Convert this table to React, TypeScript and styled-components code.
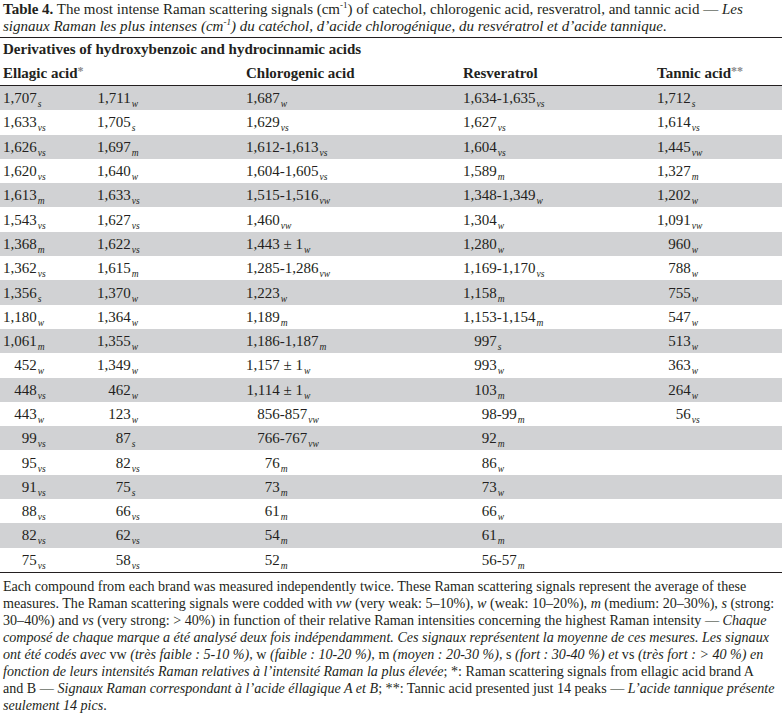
import React from "react";
import styled, { createGlobalStyle } from "styled-components";

const Global = createGlobalStyle`
  html, body { margin: 0; padding: 0; background: #ffffff; }
  body { font-family: "Liberation Serif", "Times New Roman", serif; color: #231f20; }
`;

const Page = styled.div`
  width: 782px;
  font-family: "Liberation Serif", "Times New Roman", serif;
  color: #231f20;
`;

const Caption = styled.div`
  font-size: 15px;
  line-height: 17px;
  padding: 1px 3px 2px 3px;
  border-bottom: 1.5px solid #231f20;
  white-space: nowrap;
`;

const Strong = styled.b`
  font-weight: bold;
`;

const Sup = styled.sup`
  font-size: 9px;
  line-height: 0;
  vertical-align: 6px;
`;

const GroupTitle = styled.div`
  font-size: 15px;
  font-weight: bold;
  line-height: 23px;
  height: 23px;
  padding: 0 3px;
`;

const Grid = styled.div`
  display: grid;
  grid-template-columns: 94px 149px 217px 194px 1fr;
  align-items: center;
  padding-left: 3px;
`;

const HeaderRow = styled(Grid)`
  height: 24px;
  font-size: 15px;
  font-weight: bold;
  border-bottom: 1.5px solid #231f20;
`;

const HeadCell = styled.div<{ $span?: number }>`
  grid-column: span ${(p) => p.$span ?? 1};
  white-space: nowrap;
`;

const Star = styled.span`
  color: #8a8a8a;
  font-size: 12px;
  vertical-align: 3px;
  font-weight: bold;
`;

const Row = styled(Grid)<{ $shade: boolean }>`
  height: 24.3px;
  font-size: 15px;
  background: ${(p) => (p.$shade ? "#d1d2d4" : "#ffffff")};
`;

const Cell = styled.div`
  white-space: nowrap;
  line-height: 18px;
`;

const Lead = styled.span`
  display: inline-block;
  width: 2.25em;
  text-align: right;
`;

const Sub = styled.span`
  font-style: italic;
  font-size: 9.5px;
  vertical-align: -4px;
  line-height: 0;
  margin-left: 1px;
`;

const TableEnd = styled.div`
  border-top: 1.5px solid #231f20;
`;

const Note = styled.div`
  font-size: 14.1px;
  line-height: 17px;
  padding: 5px 3px 0 3px;
  white-space: nowrap;
`;

type V = [string, string, string] | null; // lead, rest, sub

const rows: V[][] = [
  [["1,707", "", "s"], ["1,711", "", "w"], ["1,687", "", "w"], ["1,634", "-1,635", "vs"], ["1,712", "", "s"]],
  [["1,633", "", "vs"], ["1,705", "", "s"], ["1,629", "", "vs"], ["1,627", "", "vs"], ["1,614", "", "vs"]],
  [["1,626", "", "vs"], ["1,697", "", "m"], ["1,612", "-1,613", "vs"], ["1,604", "", "vs"], ["1,445", "", "vw"]],
  [["1,620", "", "vs"], ["1,640", "", "w"], ["1,604", "-1,605", "vs"], ["1,589", "", "m"], ["1,327", "", "m"]],
  [["1,613", "", "m"], ["1,633", "", "vs"], ["1,515", "-1,516", "vw"], ["1,348", "-1,349", "w"], ["1,202", "", "w"]],
  [["1,543", "", "vs"], ["1,627", "", "vs"], ["1,460", "", "vw"], ["1,304", "", "w"], ["1,091", "", "vw"]],
  [["1,368", "", "m"], ["1,622", "", "vs"], ["1,443", " ± 1", "w"], ["1,280", "", "w"], ["960", "", "w"]],
  [["1,362", "", "vs"], ["1,615", "", "m"], ["1,285", "-1,286", "vw"], ["1,169", "-1,170", "vs"], ["788", "", "w"]],
  [["1,356", "", "s"], ["1,370", "", "w"], ["1,223", "", "w"], ["1,158", "", "m"], ["755", "", "w"]],
  [["1,180", "", "w"], ["1,364", "", "w"], ["1,189", "", "m"], ["1,153", "-1,154", "m"], ["547", "", "w"]],
  [["1,061", "", "m"], ["1,355", "", "w"], ["1,186", "-1,187", "m"], ["997", "", "s"], ["513", "", "w"]],
  [["452", "", "w"], ["1,349", "", "w"], ["1,157", " ± 1", "w"], ["993", "", "w"], ["363", "", "w"]],
  [["448", "", "vs"], ["462", "", "w"], ["1,114", " ± 1", "w"], ["103", "", "m"], ["264", "", "w"]],
  [["443", "", "w"], ["123", "", "w"], ["856", "-857", "vw"], ["98", "-99", "m"], ["56", "", "vs"]],
  [["99", "", "vs"], ["87", "", "s"], ["766", "-767", "vw"], ["92", "", "m"], null],
  [["95", "", "vs"], ["82", "", "vs"], ["76", "", "m"], ["86", "", "w"], null],
  [["91", "", "vs"], ["75", "", "s"], ["73", "", "m"], ["73", "", "w"], null],
  [["88", "", "vs"], ["66", "", "vs"], ["61", "", "m"], ["66", "", "w"], null],
  [["82", "", "vs"], ["62", "", "vs"], ["54", "", "m"], ["61", "", "m"], null],
  [["75", "", "vs"], ["58", "", "vs"], ["52", "", "m"], ["56", "-57", "m"], null],
];

const Value: React.FC<{ v: V }> = ({ v }) => {
  if (!v) return <Cell />;
  const [lead, rest, sub] = v;
  return (
    <Cell>
      <Lead>{lead}</Lead>
      {rest}
      <Sub>{sub}</Sub>
    </Cell>
  );
};

export default function App() {
  return (
    <Page>
      <Global />
      <Caption>
        <Strong>Table 4.</Strong> The most intense Raman scattering signals (cm<Sup>-1</Sup>) of catechol,
        chlorogenic acid, resveratrol, and tannic acid — <i>Les</i>
        <br />
        <i>
          signaux Raman les plus intenses (cm<Sup>-1</Sup>) du catéchol, d’acide chlorogénique, du resvératrol et
          d’acide tannique
        </i>
        .
      </Caption>
      <GroupTitle>Derivatives of hydroxybenzoic and hydrocinnamic acids</GroupTitle>
      <HeaderRow>
        <HeadCell $span={2}>
          Ellagic acid<Star>*</Star>
        </HeadCell>
        <HeadCell>Chlorogenic acid</HeadCell>
        <HeadCell>Resveratrol</HeadCell>
        <HeadCell>
          Tannic acid<Star>**</Star>
        </HeadCell>
      </HeaderRow>
      {rows.map((r, i) => (
        <Row key={i} $shade={i % 2 === 0}>
          {r.map((v, j) => (
            <Value key={j} v={v} />
          ))}
        </Row>
      ))}
      <TableEnd />
      <Note>
        Each compound from each brand was measured independently twice. These Raman scattering signals represent the
        average of these
        <br />
        measures. The Raman scattering signals were codded with <i>vw</i> (very weak: 5–10%), <i>w</i> (weak:
        10–20%), <i>m</i> (medium: 20–30%), <i>s</i> (strong:
        <br />
        30–40%) and <i>vs</i> (very strong: &gt; 40%) in function of their relative Raman intensities concerning the
        highest Raman intensity — <i>Chaque</i>
        <br />
        <i>
          composé de chaque marque a été analysé deux fois indépendamment. Ces signaux représentent la moyenne de ces
          mesures. Les signaux
        </i>
        <br />
        <i>ont été codés avec </i>vw<i> (très faible : 5-10 %), </i>w<i> (faible : 10-20 %), </i>m
        <i> (moyen : 20-30 %), </i>s<i> (fort : 30-40 %) et </i>vs<i> (très fort : &gt; 40 %) en</i>
        <br />
        <i>fonction de leurs intensités Raman relatives à l’intensité Raman la plus élevée</i>; *: Raman scattering
        signals from ellagic acid brand A
        <br />
        and B — <i>Signaux Raman correspondant à l’acide éllagique A et B</i>; **: Tannic acid presented just 14 peaks
        — <i>L’acide tannique présente</i>
        <br />
        <i>seulement 14 pics</i>.
      </Note>
    </Page>
  );
}
